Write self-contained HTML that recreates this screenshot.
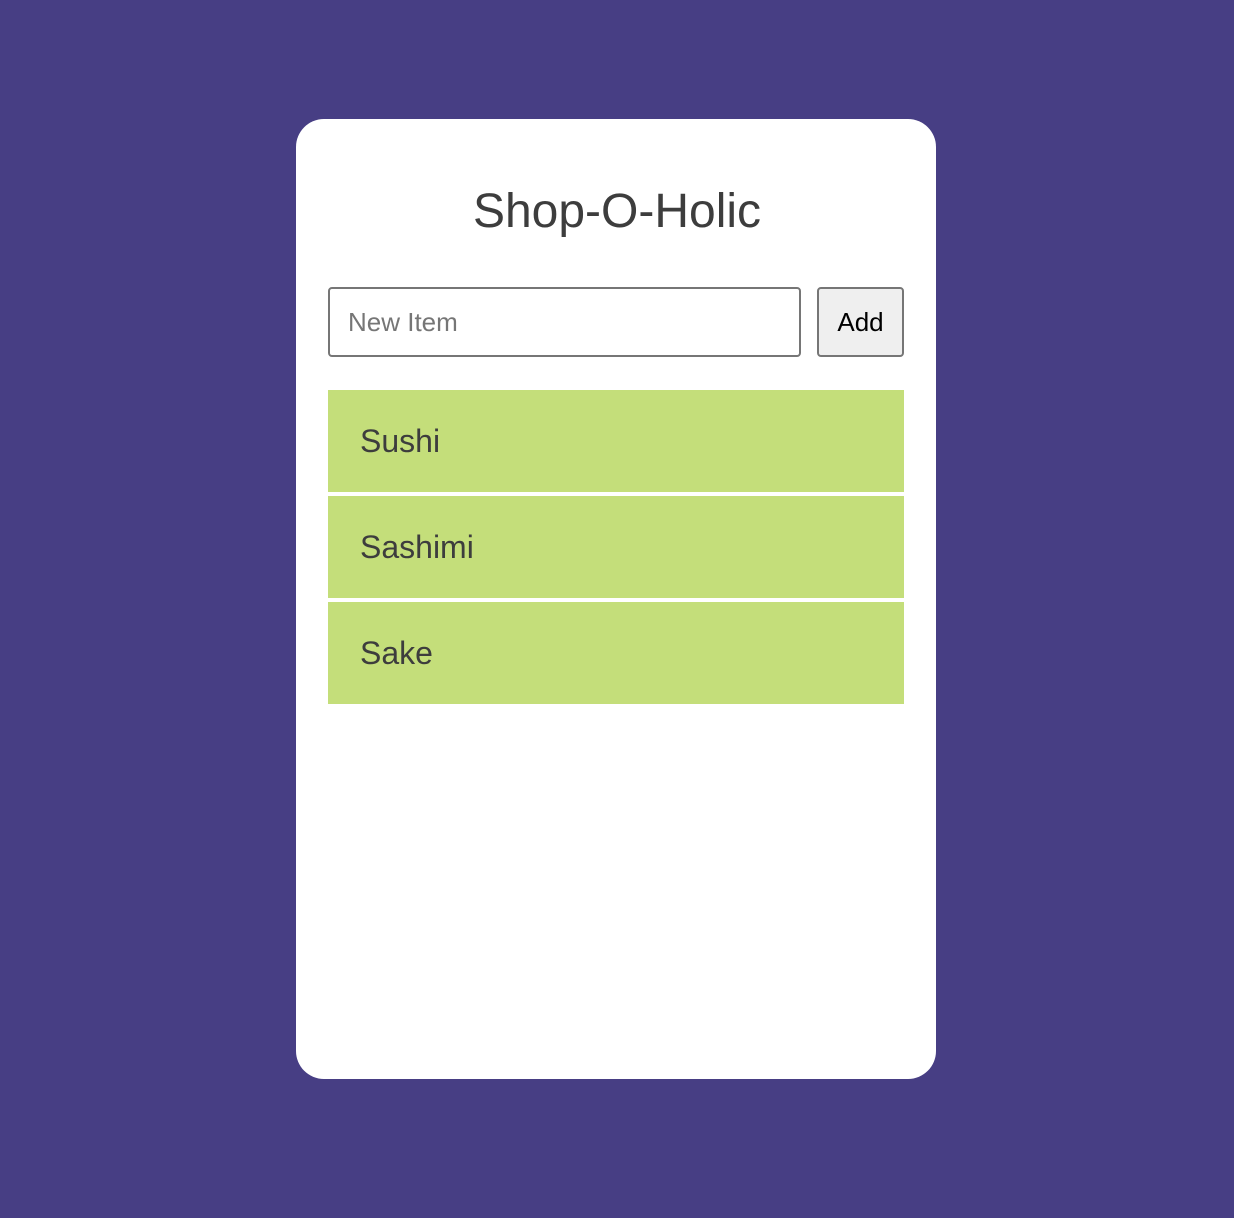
<!DOCTYPE html>
<html><head><meta charset="utf-8"><style>
html,body{margin:0;padding:0;}
body{width:1234px;height:1218px;background:#473e84;position:relative;font-family:"Liberation Sans",Arial,sans-serif;overflow:hidden;}
.card{position:absolute;left:296px;top:119px;width:640px;height:960px;background:#fff;border-radius:28px;}
h1{position:absolute;left:0;right:0;top:184px;margin:0;text-align:center;font-weight:normal;font-size:48px;line-height:56px;color:#3d3d3d;}
.input{position:absolute;left:328px;top:287px;width:469px;height:66px;border:2px solid #767676;border-radius:4px;box-sizing:content-box;}
.input span{position:absolute;left:18px;top:0;line-height:66px;font-size:26px;color:#767676;}
.btn{position:absolute;left:817px;top:287px;width:83px;height:66px;border:2px solid #767676;border-radius:4px;background:#efefef;text-align:center;line-height:66px;font-size:26px;color:#000;}
.item{position:absolute;left:328px;width:576px;height:102px;background:#c4de7a;}
.item span{position:absolute;left:32px;top:0;line-height:102px;font-size:32px;color:#3d3d3d;}
</style></head><body>
<div class="card"></div>
<h1>Shop-O-Holic</h1>
<div class="input"><span>New Item</span></div>
<div class="btn">Add</div>
<div class="item" style="top:390px"><span>Sushi</span></div>
<div class="item" style="top:496px"><span>Sashimi</span></div>
<div class="item" style="top:602px"><span>Sake</span></div>
</body></html>
